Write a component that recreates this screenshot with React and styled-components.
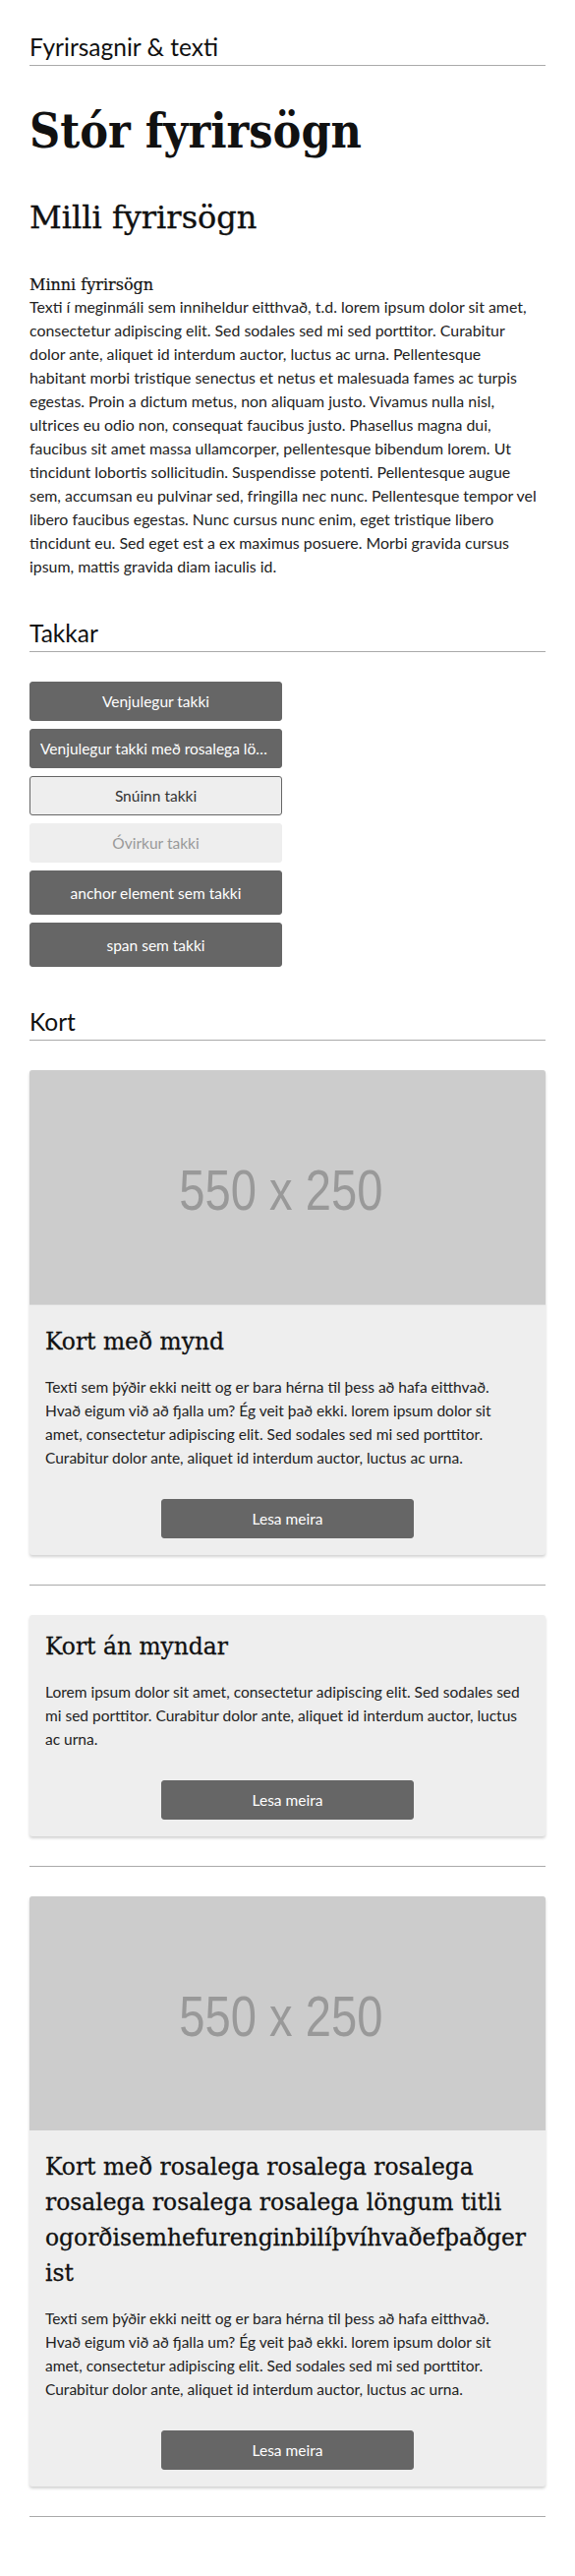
import React from 'react';
import styled, { createGlobalStyle } from 'styled-components';

const Global = createGlobalStyle`
  html, body { margin: 0; padding: 0; background: #fff; }
  body {
    font-family: Lato, "Open Sans", sans-serif;
    font-size: 16px;
    line-height: 1.5;
    color: #222;
  }
  * { box-sizing: border-box; }
`;

const serif = `"DejaVu Serif", "Liberation Serif", serif`;

const Page = styled.div`
  padding: 33px 30px 40px;
  display: flex;
  flex-direction: column;
  gap: 41px;
`;

const Section = styled.section`
  display: flex;
  flex-direction: column;
`;

const SectionTitle = styled.h2`
  margin: 0 0 ${(p) => p.$after ?? 30}px;
  font-family: Lato, sans-serif;
  font-weight: 400;
  font-size: 24.5px;
  line-height: 29px;
  padding-bottom: 4px;
  border-bottom: 1px solid #aaa;
  color: #111;
`;

const BigHeading = styled.h1`
  margin: 38px 0 0;
  font-family: "DejaVu Serif Condensed", ${serif};
  font-stretch: condensed;
  font-weight: 700;
  font-size: 48px;
  line-height: 56px;
  color: #111;
`;

const MidHeading = styled.h2`
  margin: 41px 0 0;
  font-family: ${serif};
  font-weight: 400;
  font-size: 32px;
  line-height: 38px;
  color: #111;
  -webkit-text-stroke: 0.35px #111;
`;

const SmallHeading = styled.h3`
  margin: 40px 0 0;
  font-family: ${serif};
  font-weight: 400;
  font-size: 16px;
  line-height: 19px;
  color: #111;
  -webkit-text-stroke: 0.2px #111;
`;

const Body = styled.p`
  margin: 1px 0 0;
  max-width: 519px;
  font-size: 15.9px;
  line-height: 24px;
  color: #222;
`;

const ButtonStack = styled.div`
  display: flex;
  flex-direction: column;
  align-items: flex-start;
  gap: 8px;
`;

const Btn = styled.button`
  display: block;
  width: 257px;
  padding: ${(p) => (p.$tall ? '11.5px' : '9px')} 10px;
  font-family: Lato, sans-serif;
  font-size: 15.5px;
  line-height: 20px;
  text-align: center;
  text-decoration: none;
  white-space: nowrap;
  overflow: hidden;
  text-overflow: ellipsis;
  border-radius: 3px;
  border: 1px solid ${(p) => (p.$variant === 'disabled' ? '#eee' : '#666')};
  background: ${(p) => (p.$variant === 'inverted' || p.$variant === 'disabled' ? '#eee' : '#666')};
  color: ${(p) => (p.$variant === 'inverted' ? '#333' : p.$variant === 'disabled' ? '#999' : '#fff')};
  cursor: ${(p) => (p.$variant === 'disabled' ? 'default' : 'pointer')};
`;

const Card = styled.article`
  background: #eee;
  border-radius: 3px;
  overflow: hidden;
  box-shadow: 0 2px 3px rgba(0, 0, 0, 0.18);
  display: flex;
  flex-direction: column;
`;

const Media = styled.svg`
  display: block;
  width: 100%;
  height: auto;
  margin-bottom: 5px;
`;

const CardBody = styled.div`
  padding: 14px 19px 17px 16px;
  display: flex;
  flex-direction: column;
  align-items: stretch;
`;

const CardTitle = styled.h3`
  margin: 0 0 16px;
  font-family: ${serif};
  font-weight: 400;
  font-size: 23.4px;
  line-height: 36px;
  color: #111;
  overflow-wrap: anywhere;
  -webkit-text-stroke: 0.3px #111;
`;

const CardText = styled.p`
  margin: 0 0 30px;
  font-size: 15.5px;
  line-height: 24px;
  color: #222;
`;

const CardAction = styled(Btn)`
  align-self: center;
  margin-left: 3px;
`;

const Rule = styled.hr`
  margin: 30px 0;
  border: 0;
  border-top: 1px solid #aaa;
`;

const Placeholder = () => (
  <Media viewBox="0 0 550 250" role="img" aria-label="550 x 250">
    <rect width="550" height="250" fill="#ccc" />
    <text
      x="268"
      y="149"
      textAnchor="middle"
      fontFamily="Liberation Sans, Arial, sans-serif"
      fontSize="61"
      fill="#999"
      textLength="217"
      lengthAdjust="spacingAndGlyphs"
    >
      550 x 250
    </text>
  </Media>
);

const cardText1 =
  'Texti sem þýðir ekki neitt og er bara hérna til þess að hafa eitthvað. Hvað eigum við að fjalla um? Ég veit það ekki. lorem ipsum dolor sit amet, consectetur adipiscing elit. Sed sodales sed mi sed porttitor. Curabitur dolor ante, aliquet id interdum auctor, luctus ac urna.';

export default function App() {
  return (
    <>
      <Global />
      <Page>
        <Section>
          <SectionTitle $after={0}>Fyrirsagnir &amp; texti</SectionTitle>
          <BigHeading>Stór fyrirsögn</BigHeading>
          <MidHeading>Milli fyrirsögn</MidHeading>
          <SmallHeading>Minni fyrirsögn</SmallHeading>
          <Body>
            Texti í meginmáli sem inniheldur eitthvað, t.d. lorem ipsum dolor sit amet, consectetur adipiscing
            elit. Sed sodales sed mi sed porttitor. Curabitur dolor ante, aliquet id interdum auctor, luctus ac
            urna. Pellentesque habitant morbi tristique senectus et netus et malesuada fames ac turpis egestas.
            Proin a dictum metus, non aliquam justo. Vivamus nulla nisl, ultrices eu odio non, consequat faucibus
            justo. Phasellus magna dui, faucibus sit amet massa ullamcorper, pellentesque bibendum lorem. Ut
            tincidunt lobortis sollicitudin. Suspendisse potenti. Pellentesque augue sem, accumsan eu pulvinar
            sed, fringilla nec nunc. Pellentesque tempor vel libero faucibus egestas. Nunc cursus nunc enim, eget
            tristique libero tincidunt eu. Sed eget est a ex maximus posuere. Morbi gravida cursus ipsum, mattis
            gravida diam iaculis id.
          </Body>
        </Section>

        <Section>
          <SectionTitle>Takkar</SectionTitle>
          <ButtonStack>
            <Btn>Venjulegur takki</Btn>
            <Btn>Venjulegur takki með rosalega löngum texta sem passar ekki</Btn>
            <Btn $variant="inverted">Snúinn takki</Btn>
            <Btn $variant="disabled" disabled>
              Óvirkur takki
            </Btn>
            <Btn as="a" href="#" $tall>
              anchor element sem takki
            </Btn>
            <Btn as="span" $tall>
              span sem takki
            </Btn>
          </ButtonStack>
        </Section>

        <Section>
          <SectionTitle>Kort</SectionTitle>
          <Card>
            <Placeholder />
            <CardBody>
              <CardTitle>Kort með mynd</CardTitle>
              <CardText>{cardText1}</CardText>
              <CardAction>Lesa meira</CardAction>
            </CardBody>
          </Card>
          <Rule />
          <Card>
            <CardBody>
              <CardTitle>Kort án myndar</CardTitle>
              <CardText>
                Lorem ipsum dolor sit amet, consectetur adipiscing elit. Sed sodales sed mi sed porttitor.
                Curabitur dolor ante, aliquet id interdum auctor, luctus ac urna.
              </CardText>
              <CardAction>Lesa meira</CardAction>
            </CardBody>
          </Card>
          <Rule />
          <Card>
            <Placeholder />
            <CardBody>
              <CardTitle>
                Kort með rosalega rosalega rosalega rosalega rosalega rosalega löngum titli
                ogorðisemhefurenginbilíþvíhvaðefþaðger<wbr />ist
              </CardTitle>
              <CardText>{cardText1}</CardText>
              <CardAction>Lesa meira</CardAction>
            </CardBody>
          </Card>
          <Rule />
        </Section>
      </Page>
    </>
  );
}
